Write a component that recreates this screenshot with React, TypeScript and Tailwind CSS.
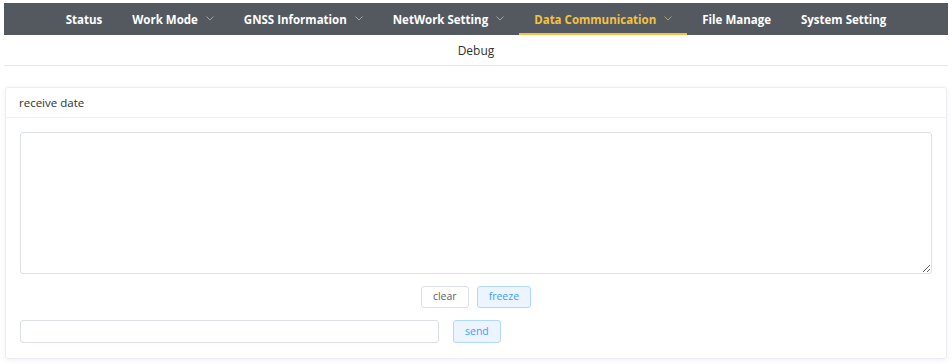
import { useState } from "react";

const NAV: { label: string; drop?: boolean; active?: boolean }[] = [
  { label: "Status" },
  { label: "Work Mode", drop: true },
  { label: "GNSS Information", drop: true },
  { label: "NetWork Setting", drop: true },
  { label: "Data Communication", drop: true, active: true },
  { label: "File Manage" },
  { label: "System Setting" },
];

function Chevron({ color }: { color: string }) {
  return (
    <svg width="8" height="5" viewBox="0 0 8 5" className="ml-[8px] mt-[-3px]">
      <path d="M0.5 0.5 L4 4 L7.5 0.5" fill="none" stroke={color} strokeWidth="0.9" />
    </svg>
  );
}

export default function App() {
  const [recv] = useState("");
  const [msg, setMsg] = useState("");

  return (
    <div
      className="w-[952px] h-[364px] bg-white pt-[3px] px-[4px] text-[#303133]"
      style={{ fontFamily: '"Open Sans", "Noto Sans", sans-serif' }}
    >
      {/* top menu */}
      <div className="h-[32px] bg-[#54595f] flex justify-center">
        {NAV.map((n) => (
          <div
            key={n.label}
            className={
              "h-full flex items-center px-[15px] pt-[3px] text-[11.5px] font-bold border-b-2 " +
              (n.active ? "text-[#f5c242] border-[#f5c242]" : "text-white border-transparent")
            }
          >
            <span>{n.label}</span>
            {n.drop && <Chevron color={n.active ? "#c9a94a" : "#a9adb2"} />}
          </div>
        ))}
      </div>

      {/* sub menu */}
      <div className="h-[31px] pt-[2px] border-b border-[#e4e7ed] flex items-center justify-center text-[12px] text-[#303133]">
        Debug
      </div>

      {/* card */}
      <div className="mt-[21px] mx-[1px] border border-[#ebeef5] rounded-[3px] shadow-[0_1px_6px_rgba(0,0,0,0.06)]">
        <div className="h-[30px] px-[13px] flex items-center border-b border-[#ebeef5] text-[11.5px] text-[#303133]">
          receive date
        </div>
        <div className="px-[14px] pt-[14px] pb-[15px]">
          <textarea
            value={recv}
            readOnly
            className="block w-full h-[142px] border border-[#dcdfe6] rounded-[3px] outline-none p-2 text-[12px]"
          />
          <div className="flex justify-center gap-[8px] mt-[12px]">
            <button className="h-[22px] px-[11px] text-[10.5px] text-[#606266] bg-white border border-[#dcdfe6] rounded-[3px]">
              clear
            </button>
            <button className="h-[22px] px-[11px] text-[10.5px] text-[#409eff] bg-[#ecf5ff] border border-[#b3d8ff] rounded-[3px]">
              freeze
            </button>
          </div>
          <div className="flex items-center gap-[14px] mt-[12px]">
            <input
              value={msg}
              onChange={(e) => setMsg(e.target.value)}
              className="w-[419px] h-[23px] border border-[#dcdfe6] rounded-[3px] outline-none px-2 text-[12px]"
            />
            <button className="h-[23px] px-[11px] text-[10.5px] text-[#409eff] bg-[#ecf5ff] border border-[#b3d8ff] rounded-[3px]">
              send
            </button>
          </div>
        </div>
      </div>
    </div>
  );
}
